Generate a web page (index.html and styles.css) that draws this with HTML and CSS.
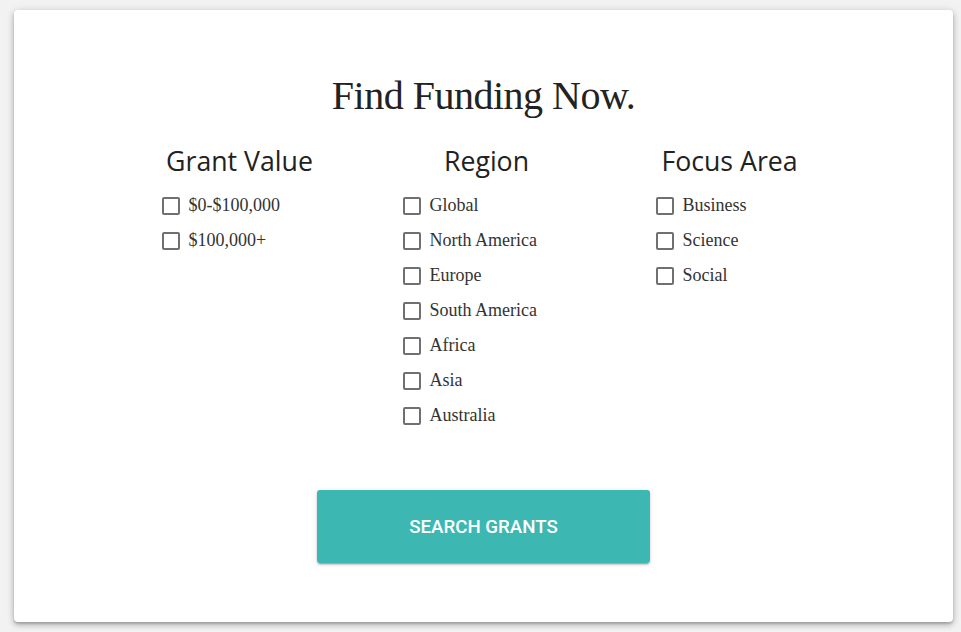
FILE: index.html
```html
<!DOCTYPE html>
<html lang="en">
<head>
<meta charset="utf-8">
<title>Find Funding Now</title>
<link rel="stylesheet" href="styles.css">
</head>
<body>
<main class="card">
  <h1 class="title">Find Funding Now.</h1>
  <div class="filters">
    <section class="filter filter-value">
      <h2 class="filter-heading">Grant Value</h2>
      <ul class="options">
        <li class="option"><span class="box"></span>$0-$100,000</li>
        <li class="option"><span class="box"></span>$100,000+</li>
      </ul>
    </section>
    <section class="filter filter-region">
      <h2 class="filter-heading">Region</h2>
      <ul class="options">
        <li class="option"><span class="box"></span>Global</li>
        <li class="option"><span class="box"></span>North America</li>
        <li class="option"><span class="box"></span>Europe</li>
        <li class="option"><span class="box"></span>South America</li>
        <li class="option"><span class="box"></span>Africa</li>
        <li class="option"><span class="box"></span>Asia</li>
        <li class="option"><span class="box"></span>Australia</li>
      </ul>
    </section>
    <section class="filter filter-focus">
      <h2 class="filter-heading">Focus Area</h2>
      <ul class="options">
        <li class="option"><span class="box"></span>Business</li>
        <li class="option"><span class="box"></span>Science</li>
        <li class="option"><span class="box"></span>Social</li>
      </ul>
    </section>
  </div>
  <div class="actions">
    <button class="search-btn" type="button">Search Grants</button>
  </div>
</main>
</body>
</html>
```
FILE: styles.css
```css
html, body {
  margin: 0;
  padding: 0;
}
body {
  background: #f2f2f2;
  padding: 10px 8px 10px 14px;
  width: 939px;
  box-sizing: content-box;
}
.card {
  background: #fff;
  width: 939px;
  height: 612px;
  box-sizing: border-box;
  border-radius: 4px;
  box-shadow: 0 2px 2px rgba(0,0,0,0.14), 0 3px 6px rgba(0,0,0,0.2), 0 1px 8px rgba(0,0,0,0.12);
  padding-top: 60px;
  display: flex;
  flex-direction: column;
  align-items: center;
}
.title {
  margin: 0;
  font-family: "Liberation Serif", serif;
  font-weight: 400;
  font-size: 40px;
  line-height: 52px;
  letter-spacing: -0.5px;
  color: #222;
}
.filters {
  display: grid;
  grid-template-columns: 156px 168px 148px;
  column-gap: 85px;
  margin-top: 21px;
  margin-left: -2px;
}
.filter-heading {
  margin: 0;
  text-align: center;
  font-family: "Open Sans", sans-serif;
  font-weight: 400;
  font-size: 26.7px;
  line-height: 36px;
  color: #222;
}
.options {
  list-style: none;
  margin: 9px 0 0;
  padding: 0;
}
.option {
  display: flex;
  align-items: center;
  height: 35px;
  font-family: "Liberation Serif", serif;
  font-size: 18px;
  color: #333;
}
.box {
  width: 18px;
  height: 18px;
  box-sizing: border-box;
  border: 2px solid #707070;
  border-radius: 2px;
  margin-right: 9px;
  flex: none;
}
.actions {
  margin-top: 57px;
}
.search-btn {
  width: 333px;
  height: 73px;
  border: none;
  border-radius: 3px;
  background: #3db7b2;
  color: #fff;
  font-family: Roboto, sans-serif;
  font-weight: 500;
  font-size: 18.7px;
  text-transform: uppercase;
  letter-spacing: 0;
  box-shadow: 0 2px 2px rgba(0,0,0,0.14), 0 3px 1px -2px rgba(0,0,0,0.2), 0 1px 5px rgba(0,0,0,0.12);
}
```
